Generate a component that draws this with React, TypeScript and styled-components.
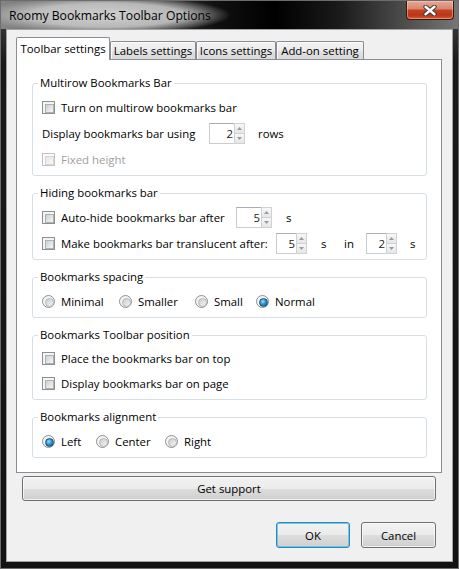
import React from "react";
import styled, { createGlobalStyle } from "styled-components";

const FONT = `"Segoe UI", "Open Sans", "Noto Sans", sans-serif`;

const Global = createGlobalStyle`
  html, body { margin: 0; padding: 0; background: #5c5c5c; }
  body { font-family: ${FONT}; font-size: 11.4px; color: #000; }
  * { box-sizing: border-box; }
`;

const Window = styled.div`
  width: 459px;
  height: 569px;
  display: flex;
  flex-direction: column;
  border: 1px solid #6c6c6c;
  background: linear-gradient(to bottom, #4a4a4a 0px, #1a1a1a 60px, #121212 100%);
`;

const TitleBar = styled.div`
  height: 28px;
  flex: none;
  display: flex;
  align-items: flex-start;
  justify-content: space-between;
  background:
    radial-gradient(ellipse 124px 19px at 106px 14px, rgba(214,214,214,0.95) 0%, rgba(196,196,196,0.9) 62%, rgba(150,150,150,0) 100%),
    linear-gradient(to right, #858585 0%, #5a5a5a 22%, #101010 47%, #000 60%, #1a1a1a 74%, #4c4c4c 88%, #767676 100%);
`;

const Title = styled.div`
  padding: 7px 0 0 8px;
  line-height: 15px;
  font-size: 12.2px;
  color: #000;
  white-space: nowrap;
`;

const CloseButton = styled.div`
  width: 48px;
  height: 19px;
  margin-right: 4px;
  display: flex;
  align-items: center;
  justify-content: center;
  border: 1px solid #3b1710;
  border-top: none;
  border-radius: 0 0 4px 4px;
  background: linear-gradient(to bottom, #e6a898 0%, #d98670 42%, #c4441f 52%, #b9351a 78%, #d9582c 100%);
  box-shadow: inset 0 0 0 1px rgba(255, 215, 200, 0.45);
`;

const FrameBody = styled.div`
  flex: 1;
  display: flex;
  padding: 0 5px 6px 5px;
  min-height: 0;
`;

const Client = styled.div`
  flex: 1;
  display: flex;
  flex-direction: column;
  border: 1px solid #a2a2a2;
  background: #f0f0f0;
  padding-top: 7px;
`;

const TabStrip = styled.div`
  display: flex;
  align-items: flex-end;
  height: 22px;
  margin-left: 9px;
  position: relative;
  z-index: 1;
`;

const Tab = styled.div<{ $active?: boolean; $w: number }>`
  width: ${(p) => p.$w}px;
  height: ${(p) => (p.$active ? 23 : 18)}px;
  margin-bottom: ${(p) => (p.$active ? -1 : 0)}px;
  border: 1px solid #898c95;
  border-bottom: none;
  border-radius: 2px 2px 0 0;
  display: flex;
  align-items: center;
  justify-content: center;
  padding-bottom: ${(p) => (p.$active ? 2 : 0)}px;
  white-space: nowrap;
  background: ${(p) =>
    p.$active
      ? "#fff"
      : "linear-gradient(to bottom, #f3f3f3 0%, #ececec 50%, #e2e2e2 51%, #d9d9d9 100%)"};
  box-shadow: ${(p) => (p.$active ? "none" : "inset 1px 1px 0 #fbfbfb")};
`;

const Panel = styled.div`
  margin-left: 9px;
  width: 426px;
  height: 414px;
  border: 1px solid #898c95;
  background: #fff;
  padding: 16px 0 0 15px;
  display: flex;
  flex-direction: column;
  gap: 10px;
`;

const Group = styled.fieldset`
  width: 395px;
  margin: 0;
  border: 1px solid #d5dfe5;
  border-radius: 3px;
  padding: 4px 0 3px 9px;
  min-width: 0;
`;

const Legend = styled.legend`
  padding: 0 2px;
  margin-left: -4px;
  line-height: 14px;
  height: 14px;
  color: #000;
`;

const Row = styled.div<{ $h?: number }>`
  height: ${(p) => p.$h ?? 26}px;
  display: flex;
  align-items: center;
  white-space: nowrap;
`;

const Option = styled.div<{ $w?: number }>`
  display: flex;
  align-items: center;
  gap: 6px;
  flex: none;
  width: ${(p) => (p.$w ? `${p.$w}px` : "auto")};
`;

const Text = styled.span<{ $w?: number; $ml?: number; $disabled?: boolean }>`
  flex: none;
  width: ${(p) => (p.$w ? `${p.$w}px` : "auto")};
  margin-left: ${(p) => p.$ml ?? 0}px;
  color: ${(p) => (p.$disabled ? "#a0a0a0" : "#000")};
  line-height: 15px;
`;

const CheckBox = styled.span<{ $disabled?: boolean }>`
  width: 13px;
  height: 13px;
  flex: none;
  border: 1px solid ${(p) => (p.$disabled ? "#c2c2c2" : "#8e8f8f")};
  background: ${(p) => (p.$disabled ? "#fbfbfb" : "#f4f4f4")};
  padding: 2px;
  &::after {
    content: "";
    display: block;
    width: 100%;
    height: 100%;
    border: 1px solid ${(p) => (p.$disabled ? "#d8d8d8" : "#aeb1b6")};
    background: ${(p) =>
      p.$disabled
        ? "linear-gradient(135deg, #e6e6e6, #f8f8f8)"
        : "linear-gradient(135deg, #cbcdd0 0%, #e4e5e6 55%, #f4f4f4 100%)"};
  }
`;

const RadioDot = styled.span<{ $checked?: boolean }>`
  width: 13px;
  height: 13px;
  flex: none;
  border-radius: 50%;
  border: 1px solid #8e8f8f;
  background: #f4f4f4;
  padding: 2px;
  &::after {
    content: "";
    display: block;
    width: 100%;
    height: 100%;
    border-radius: 50%;
    border: 1px solid ${(p) => (p.$checked ? "#1b4f78" : "#b3b5b8")};
    background: ${(p) =>
      p.$checked
        ? "radial-gradient(circle at 40% 35%, #9fe0fb 0%, #2a94d0 45%, #0b5f97 100%)"
        : "linear-gradient(135deg, #cbcdd0 0%, #e2e3e4 55%, #f6f6f6 100%)"};
  }
`;

const SpinBox = styled.div<{ $w: number }>`
  width: ${(p) => p.$w}px;
  height: 21px;
  flex: none;
  display: flex;
  border: 1px solid #c9ccd2;
  border-top-color: #abadb3;
  background: #fff;
`;

const SpinValue = styled.span`
  flex: 1;
  text-align: right;
  padding-right: 1px;
  line-height: 19px;
  color: #222;
`;

const SpinButtons = styled.div`
  width: 11px;
  flex: none;
  display: flex;
  flex-direction: column;
  margin: -1px -1px -1px 0;
`;

const SpinBtn = styled.span`
  flex: 1;
  display: flex;
  align-items: center;
  justify-content: center;
  border: 1px solid #cfd1d4;
  background: linear-gradient(to bottom, #f7f7f7, #e6e6e6);
  & + & {
    border-top: none;
  }
`;

const ButtonArea = styled.div`
  display: flex;
  flex-direction: column;
`;

const PushButton = styled.button<{ $default?: boolean; $w: number; $h: number }>`
  width: ${(p) => p.$w}px;
  height: ${(p) => p.$h}px;
  padding: 0;
  font-family: ${FONT};
  font-size: 11.4px;
  color: #000;
  border: 1px solid ${(p) => (p.$default ? "#3c7fb1" : "#707070")};
  border-radius: 3px;
  background: linear-gradient(to bottom, #f2f2f2 0%, #ebebeb 50%, #dddddd 51%, #cfcfcf 100%);
  box-shadow: inset 0 0 0 1px ${(p) => (p.$default ? "rgba(80, 200, 240, 0.85)" : "rgba(252, 252, 252, 0.75)")};
`;

const SupportRow = styled.div`
  margin: 3px 0 0 15px;
`;

const Footer = styled.div`
  display: flex;
  justify-content: flex-end;
  gap: 11px;
  margin-top: 21px;
  padding-right: 16px;
`;

const Arrow = ({ up }: { up?: boolean }) => (
  <svg width="5" height="3" viewBox="0 0 5 3">
    <path d={up ? "M0 3 L2.5 0 L5 3 Z" : "M0 0 L2.5 3 L5 0 Z"} fill="#9a9a9a" />
  </svg>
);

const Spin = ({ w, value }: { w: number; value: string }) => (
  <SpinBox $w={w}>
    <SpinValue>{value}</SpinValue>
    <SpinButtons>
      <SpinBtn>
        <Arrow up />
      </SpinBtn>
      <SpinBtn>
        <Arrow />
      </SpinBtn>
    </SpinButtons>
  </SpinBox>
);

const Check = ({ label, disabled, w }: { label: string; disabled?: boolean; w?: number }) => (
  <Option>
    <CheckBox $disabled={disabled} />
    <Text $disabled={disabled} $w={w}>
      {label}
    </Text>
  </Option>
);

const Radio = ({ label, checked, w }: { label: string; checked?: boolean; w?: number }) => (
  <Option $w={w}>
    <RadioDot $checked={checked} />
    <Text>{label}</Text>
  </Option>
);

const CloseGlyph = () => (
  <svg width="14" height="11" viewBox="0 0 14 11">
    <path d="M2.5 1.8 L11.5 9.2 M11.5 1.8 L2.5 9.2" stroke="#3a3a3a" strokeWidth="4.4" strokeLinecap="round" />
    <path d="M2.5 1.8 L11.5 9.2 M11.5 1.8 L2.5 9.2" stroke="#fff" strokeWidth="2.4" strokeLinecap="round" />
  </svg>
);

export default function App() {
  return (
    <>
      <Global />
      <Window>
        <TitleBar>
          <Title>Roomy Bookmarks Toolbar Options</Title>
          <CloseButton>
            <CloseGlyph />
          </CloseButton>
        </TitleBar>
        <FrameBody>
          <Client>
            <TabStrip>
              <Tab $active $w={94}>Toolbar settings</Tab>
              <Tab $w={86}>Labels settings</Tab>
              <Tab $w={80}>Icons settings</Tab>
              <Tab $w={88}>Add-on setting</Tab>
            </TabStrip>
            <Panel>
              <Group>
                <Legend>Multirow Bookmarks Bar</Legend>
                <Row>
                  <Check label="Turn on multirow bookmarks bar" />
                </Row>
                <Row>
                  <Text $w={167}>Display bookmarks bar using</Text>
                  <Spin w={36} value="2" />
                  <Text $ml={13}>rows</Text>
                </Row>
                <Row>
                  <Check label="Fixed height" disabled />
                </Row>
              </Group>
              <Group>
                <Legend>Hiding bookmarks bar</Legend>
                <Row>
                  <Check label="Auto-hide bookmarks bar after" w={175} />
                  <Spin w={36} value="5" />
                  <Text $ml={14}>s</Text>
                </Row>
                <Row>
                  <Check label="Make bookmarks bar translucent after:" w={215} />
                  <Spin w={31} value="5" />
                  <Text $ml={14} $w={23}>s</Text>
                  <Text $w={22}>in</Text>
                  <Spin w={31} value="2" />
                  <Text $ml={13}>s</Text>
                </Row>
              </Group>
              <Group>
                <Legend>Bookmarks spacing</Legend>
                <Row>
                  <Radio label="Minimal" w={77} />
                  <Radio label="Smaller" w={76} />
                  <Radio label="Small" w={61} />
                  <Radio label="Normal" checked />
                </Row>
              </Group>
              <Group>
                <Legend>Bookmarks Toolbar position</Legend>
                <Row $h={25}>
                  <Check label="Place the bookmarks bar on top" />
                </Row>
                <Row $h={25}>
                  <Check label="Display bookmarks bar on page" />
                </Row>
              </Group>
              <Group>
                <Legend>Bookmarks alignment</Legend>
                <Row>
                  <Radio label="Left" checked w={54} />
                  <Radio label="Center" w={69} />
                  <Radio label="Right" />
                </Row>
              </Group>
            </Panel>
            <ButtonArea>
              <SupportRow>
                <PushButton $w={414} $h={25}>Get support</PushButton>
              </SupportRow>
              <Footer>
                <PushButton $default $w={74} $h={26}>OK</PushButton>
                <PushButton $w={75} $h={26}>Cancel</PushButton>
              </Footer>
            </ButtonArea>
          </Client>
        </FrameBody>
      </Window>
    </>
  );
}
